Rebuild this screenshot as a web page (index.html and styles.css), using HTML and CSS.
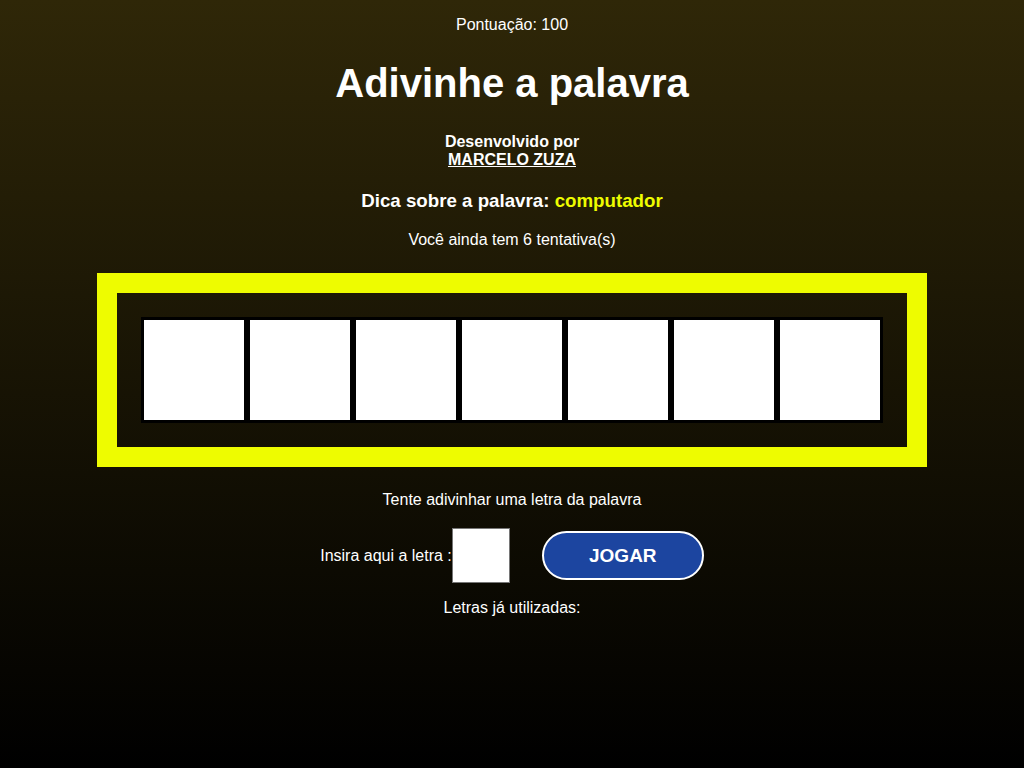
FILE: index.html
```html
<!DOCTYPE html>
<html lang="pt-BR">
<head>
<meta charset="utf-8">
<title>Adivinhe a palavra</title>
<link rel="stylesheet" href="styles.css">
</head>
<body>
<main class="game">
  <p class="score">Pontuação: 100</p>
  <h1 class="title">Adivinhe a palavra</h1>
  <h4 class="dev">Desenvolvido por<br><a href="#" class="dev-link">MARCELO ZUZA</a></h4>
  <h3 class="hint">Dica sobre a palavra: <span class="hint-word">computador</span></h3>
  <p class="tries">Você ainda tem 6 tentativa(s)</p>
  <div class="board">
    <div class="slots">
      <div class="slot"></div>
      <div class="slot"></div>
      <div class="slot"></div>
      <div class="slot"></div>
      <div class="slot"></div>
      <div class="slot"></div>
      <div class="slot"></div>
    </div>
  </div>
  <p class="prompt">Tente adivinhar uma letra da palavra</p>
  <div class="play-row">
    <label class="letter-label" for="letra">Insira aqui a letra :</label>
    <input id="letra" class="letter-input" type="text" maxlength="1">
    <button class="play-btn" type="button">JOGAR</button>
  </div>
  <p class="used">Letras já utilizadas:</p>
</main>
</body>
</html>
```

FILE: styles.css
```css
html, body {
  margin: 0;
  padding: 0;
  height: 100%;
}
body {
  background: linear-gradient(to bottom, #2f2708 0%, #000000 100%);
  color: #ffffff;
  font-family: "Liberation Sans", Arial, sans-serif;
  font-size: 16px;
}
.game {
  display: flex;
  flex-direction: column;
  align-items: center;
  text-align: center;
  padding-top: 16px;
}
.score {
  margin: 0;
  line-height: 18px;
}
.title {
  margin: 26px 0 0;
  font-size: 40px;
  line-height: 46px;
  font-weight: bold;
}
.dev {
  margin: 27px 0 0;
  font-size: 16px;
  line-height: 18px;
  font-weight: bold;
}
.dev-link {
  color: #ffffff;
  text-decoration: underline;
}
.hint {
  margin: 21px 0 0;
  font-size: 18.72px;
  line-height: 22px;
  font-weight: bold;
}
.hint-word {
  color: #eefc00;
}
.tries {
  margin: 19px 0 0;
  line-height: 18px;
}
.board {
  margin-top: 24px;
  border: 20px solid #eefc00;
  padding: 24px;
}
.slots {
  display: flex;
}
.slot {
  width: 100px;
  height: 100px;
  background: #ffffff;
  border: 3px solid #000000;
}
.prompt {
  margin: 24px 0 0;
  line-height: 18px;
}
.play-row {
  margin-top: 19px;
  display: flex;
  align-items: center;
  height: 55px;
}
.letter-label {
  line-height: 18px;
}
.letter-input {
  box-sizing: border-box;
  width: 58px;
  height: 55px;
  margin: 0;
  padding: 0;
  border: 1px solid #767676;
  background: #ffffff;
  font-family: "Liberation Sans", Arial, sans-serif;
  font-size: 16px;
  text-align: center;
}
.play-btn {
  box-sizing: border-box;
  margin-left: 32px;
  width: 162px;
  height: 49px;
  border: 2px solid #ffffff;
  border-radius: 25px;
  background: #1c45a0;
  color: #ffffff;
  font-family: "Liberation Sans", Arial, sans-serif;
  font-size: 19px;
  font-weight: bold;
  cursor: pointer;
}
.used {
  margin: 16px 0 0;
  line-height: 18px;
}
```
